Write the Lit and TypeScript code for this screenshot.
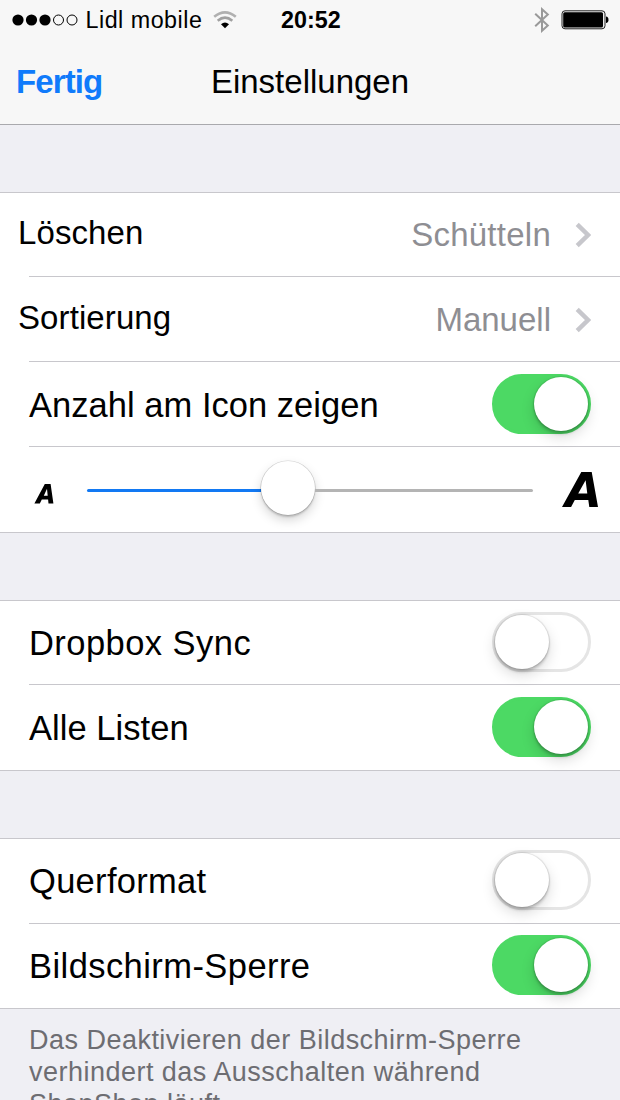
import { LitElement, html, css, svg } from "lit";
import { customElement, property } from "lit/decorators.js";
import { styleMap } from "lit/directives/style-map.js";

@customElement("ios-switch")
class IosSwitch extends LitElement {
  @property({ type: Boolean, reflect: true }) on = false;
  static styles = css`
    :host { display: block; flex: none; width: 99px; height: 60px; }
    .track {
      box-sizing: border-box; width: 99px; height: 60px; border-radius: 30px;
      border: 3px solid #e5e5e5; background: #fff; display: flex; align-items: center;
    }
    :host([on]) .track { background: #4cd964; border-color: #4cd964; justify-content: flex-end; }
    .knob {
      width: 54px; height: 54px; border-radius: 50%; background: #fff;
      box-shadow: 0 3px 3px rgba(0,0,0,.18), 0 6px 14px rgba(0,0,0,.15), 0 0 1px 1px rgba(0,0,0,.1);
    }
  `;
  render() {
    return html`<div class="track"><div class="knob"></div></div>`;
  }
}

@customElement("ios-slider")
class IosSlider extends LitElement {
  @property({ type: Number }) value = 0.45;
  static styles = css`
    :host { display: flex; align-items: center; width: 446px; height: 56px; }
    .left { height: 3px; border-radius: 2px 0 0 2px; background: #1279f3; }
    .right { height: 3px; flex: 1; border-radius: 0 2px 2px 0; background: #b4b4b4; }
    .thumb {
      flex: none; width: 54px; height: 54px; border-radius: 50%; background: #fff; margin-bottom: 4px;
      box-shadow: 0 0 0 .6px rgba(0,0,0,.16), 0 2px 2px rgba(0,0,0,.18), 0 5px 11px rgba(0,0,0,.17);
    }
  `;
  render() {
    return html`
      <div class="left" style=${styleMap({ width: `${(446 - 54) * this.value}px` })}></div>
      <div class="thumb"></div>
      <div class="right"></div>`;
  }
}

type Row = { label: string; tracking: number; value?: string; valueTracking?: number; on?: boolean };

const listRows: Row[] = [
  { label: "Löschen", tracking: 0.1, value: "Schütteln", valueTracking: 0.25 },
  { label: "Sortierung", tracking: 0.1, value: "Manuell", valueTracking: 0 },
  { label: "Anzahl am Icon zeigen", tracking: 0.03, on: true },
];
const syncRows: Row[] = [
  { label: "Dropbox Sync", tracking: 0.45, on: false },
  { label: "Alle Listen", tracking: 0.05, on: true },
];
const screenRows: Row[] = [
  { label: "Querformat", tracking: 0.3, on: false },
  { label: "Bildschirm-Sperre", tracking: 0.43, on: true },
];

@customElement("app-root")
class AppRoot extends LitElement {
  static styles = css`
    :host {
      display: block; width: 620px; height: 1100px; overflow: hidden; background: #efeff4;
      font-family: "Liberation Sans", Arial, sans-serif; color: #000; white-space: nowrap;
    }
    .top { height: 124px; background: #f7f7f7; border-bottom: 1px solid #a9a9ad; }
    .status { display: flex; align-items: center; height: 40px; font-size: 23.3px; line-height: 40px; }
    .dots { display: block; margin-left: 12px; }
    .carrier { letter-spacing: .5px; margin-left: 6.5px; width: 120px; }
    .wifi { display: block; margin-left: 7.5px; }
    .clock { font-weight: 700; margin-left: 44px; width: 62px; }
    .bt { display: block; margin-left: 191px; }
    .battery { display: block; margin-left: 11px; }
    .nav { display: grid; grid-template-columns: 1fr auto 1fr; align-items: center; height: 84px; font-size: 33px; }
    .done { color: #107bfb; font-weight: 700; letter-spacing: -.9px; padding-left: 16px; }
    .title { letter-spacing: 0; }
    .group { background: #fff; border-top: 1px solid #c8c7cc; border-bottom: 1px solid #c8c7cc; margin-top: 67px; }
    .row {
      display: flex; align-items: flex-start; justify-content: space-between; box-sizing: border-box;
      height: 85px; margin-left: 29px; padding-right: 29px; border-bottom: 1px solid #c8c7cc;
      font-size: 34.5px; line-height: 40px;
    }
    .row:first-child { height: 84px; }
    .row:last-child { border-bottom: 0; height: 85px; }
    .screen .row:first-child { height: 85px; }
    .screen .row:last-child { height: 84px; }
    .label { padding-top: 23px; }
    ios-switch { margin-top: 12px; }
    .screen ios-switch, .sync .row:first-child ios-switch { margin-top: 11px; }
    .screen .label, .sync .row:first-child .label { padding-top: 22px; }
    .link .label { font-size: 33px; margin-left: -11px; padding-top: 20px; }
    .detail { display: flex; align-items: center; gap: 24px; color: #8e8e93; font-size: 33px; padding-top: 22px; }
    .link + .link .label { padding-top: 21px; }
    .link + .link .detail { padding-top: 23px; }
    .chevron { display: block; }
    .size { align-items: center; justify-content: flex-start; padding: 1px 0 0; }
    .a { display: block; }
    .small { margin: 8px 0 0 6px; width: 52px; overflow: visible; }
    .big { margin-left: 29px; }
    .note { margin: 15px 0 0 29px; font-size: 27px; line-height: 32px; letter-spacing: .48px; color: #6d6d72; }
  `;

  renderRow(r: Row) {
    return html`
      <div class="row ${r.value ? "link" : ""}">
        <span class="label" style=${styleMap({ letterSpacing: `${r.tracking}px` })}>${r.label}</span>
        ${r.value
          ? html`<span class="detail">
              <span style=${styleMap({ letterSpacing: `${r.valueTracking}px` })}>${r.value}</span>
              <svg class="chevron" width="16" height="26" viewBox="0 0 16 26">
                <path d="M2.2 2.4 13 13 2.2 23.6" fill="none" stroke="#c7c7cc" stroke-width="4.4" />
              </svg>
            </span>`
          : html`<ios-switch ?on=${r.on}></ios-switch>`}
      </div>`;
  }

  render() {
    return html`
      <header class="top">
        <div class="status">
          <svg class="dots" width="67" height="12" viewBox="0 0 67 12">
            ${[0, 1, 2, 3, 4].map((i) => svg`<circle cx=${6 + i * 13.5} cy="6" r=${i < 3 ? 5.6 : 5}
              fill=${i < 3 ? "#000" : "none"} stroke=${i < 3 ? "none" : "#000"} stroke-width="1"/>`)}
          </svg>
          <span class="carrier">Lidl mobile</span>
          <svg class="wifi" width="24" height="18" viewBox="0 0 24 18">
            <path d="M1.2 5.8Q12-3 22.8 5.8" fill="none" stroke="#b0b0b0" stroke-width="2.6"/>
            <path d="M4.7 9.8Q12 3.6 19.3 9.8" fill="none" stroke="#a0a0a0" stroke-width="2.6"/>
            <path d="M8 13.2Q12 9.8 16 13.2L12 17.3Z"/>
          </svg>
          <span class="clock">20:52</span>
          <svg class="bt" width="16" height="26" viewBox="0 0 16 26">
            <path d="M1.2 6.8 13.8 18.6 8 23.8V2.2l5.8 5.2L1.2 19.2" fill="none" stroke="#999" stroke-width="2"/>
          </svg>
          <svg class="battery" width="48" height="20" viewBox="0 0 48 20">
            <rect x="1" y=".8" width="43" height="18" rx="3" fill="#eee" stroke="#222" stroke-width="1"/>
            <rect x="2.2" y="2.2" width="39.8" height="15.2" rx="1.5"/>
            <path d="M45 6.5q2.5.4 2.5 3.3T45 13.1z"/>
          </svg>
        </div>
        <div class="nav">
          <span class="done">Fertig</span>
          <span class="title">Einstellungen</span>
        </div>
      </header>
      <section class="group">
        ${listRows.map((r) => this.renderRow(r))}
        <div class="row size">
          <svg class="a small" width="52" height="22" viewBox="0 0 52 22">
            <path fill-rule="evenodd" d="M-.6 20.5 9.8 1h5.8L18.4 20.5h-4.9l-.4-4H6.8l-2 4zM8.8 12.8h3.9L12 5.7z"/>
          </svg>
          <ios-slider .value=${0.443}></ios-slider>
          <svg class="a big" width="38" height="38" viewBox="0 0 38 38">
            <path fill-rule="evenodd" d="M0 36 19.3 1h10.4L36 36h-8.7l-1-7H12.8l-3.7 7zM16.2 22.5h9.1L23.6 9.3z"/>
          </svg>
        </div>
      </section>
      <section class="group sync">${syncRows.map((r) => this.renderRow(r))}</section>
      <section class="group screen">${screenRows.map((r) => this.renderRow(r))}</section>
      <div class="note">Das Deaktivieren der Bildschirm-Sperre<br />verhindert das Ausschalten während<br />ShopShop läuft.</div>
    `;
  }
}
